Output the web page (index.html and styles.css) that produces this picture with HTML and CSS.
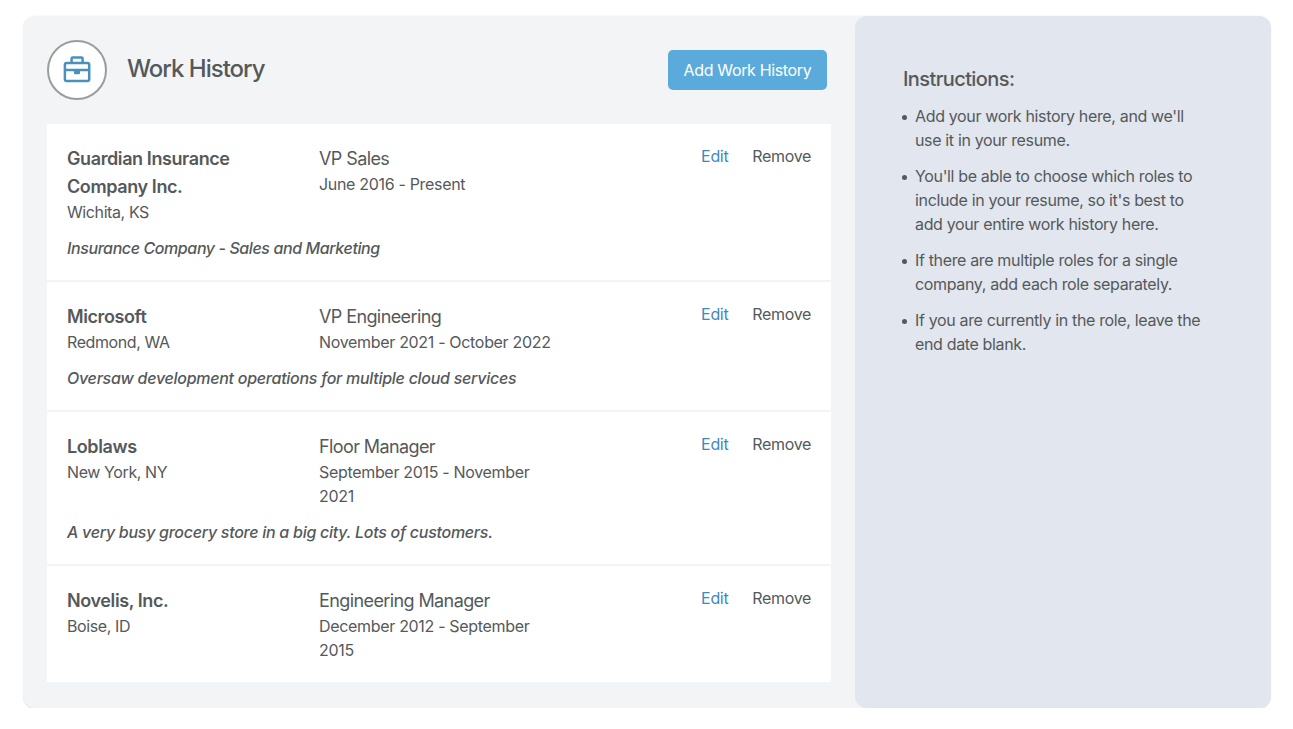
FILE: index.html
```html
<!DOCTYPE html>
<html lang="en">
<head>
<meta charset="utf-8">
<title>Work History</title>
<link rel="stylesheet" href="styles.css">
</head>
<body>
<main class="panel">
  <section class="history">
    <header class="header">
      <div class="badge">
        <svg width="28" height="28" viewBox="0 0 28 28" fill="none" stroke="#4a90bd" stroke-width="2.5" stroke-linejoin="round">
          <rect x="1.9" y="7.1" width="24.3" height="18" rx="1.8"/>
          <path d="M8.6 7V2.6q0-1 1-1h9q1 0 1 1V7M2 13.9h24"/>
          <path d="M11 14h6v3.2q0 1.1-1.1 1.1h-3.8q-1.1 0-1.1-1.1z" fill="#4a90bd" stroke="none"/>
        </svg>
      </div>
      <h1 class="title">Work History</h1>
      <button class="add">Add Work History</button>
    </header>
    <div class="list">
      <article class="job">
        <div class="row">
          <div class="company"><h2 class="name">Guardian Insurance<br>Company Inc.</h2><p class="meta">Wichita, KS</p></div>
          <div class="role"><h3 class="position">VP Sales</h3><p class="meta">June 2016 - Present</p></div>
          <div class="actions"><a class="edit">Edit</a><a class="remove">Remove</a></div>
        </div>
        <p class="summary tight">Insurance Company - Sales and Marketing</p>
      </article>
      <article class="job">
        <div class="row">
          <div class="company"><h2 class="name">Microsoft</h2><p class="meta">Redmond, WA</p></div>
          <div class="role"><h3 class="position">VP Engineering</h3><p class="meta">November 2021 - October 2022</p></div>
          <div class="actions"><a class="edit">Edit</a><a class="remove">Remove</a></div>
        </div>
        <p class="summary">Oversaw development operations for multiple cloud services</p>
      </article>
      <article class="job">
        <div class="row">
          <div class="company"><h2 class="name">Loblaws</h2><p class="meta">New York, NY</p></div>
          <div class="role"><h3 class="position">Floor Manager</h3><p class="meta">September 2015 - November<br>2021</p></div>
          <div class="actions"><a class="edit">Edit</a><a class="remove">Remove</a></div>
        </div>
        <p class="summary">A very busy grocery store in a big city. Lots of customers.</p>
      </article>
      <article class="job">
        <div class="row">
          <div class="company"><h2 class="name">Novelis, Inc.</h2><p class="meta">Boise, ID</p></div>
          <div class="role"><h3 class="position">Engineering Manager</h3><p class="meta">December 2012 - September<br>2015</p></div>
          <div class="actions"><a class="edit">Edit</a><a class="remove">Remove</a></div>
        </div>
      </article>
    </div>
  </section>
  <aside class="help">
    <h2 class="help-title">Instructions:</h2>
    <ul class="tips">
      <li>Add your work history here, and we'll<br>use it in your resume.</li>
      <li>You'll be able to choose which roles to<br>include in your resume, so it's best to<br>add your entire work history here.</li>
      <li>If there are multiple roles for a single<br>company, add each role separately.</li>
      <li>If you are currently in the role, leave the<br>end date blank.</li>
    </ul>
  </aside>
</main>
</body>
</html>
```
FILE: styles.css
```css
* { box-sizing: border-box; margin: 0; padding: 0; }
body {
  background: #fff;
  color: #55595a;
  font: 16px/24px Inter, "Liberation Sans", sans-serif;
  letter-spacing: -0.32px;
  padding: 16px 22px 0 23px;
  white-space: nowrap;
}
.panel {
  display: flex;
  height: 692px;
  background: #f2f4f6;
  border-radius: 12px;
  box-shadow: 0 0 0 1px rgba(0,0,0,.02), 0 1px 0 rgba(0,0,0,.09);
}
.history { width: 832px; padding: 24px; }
.header { display: flex; align-items: center; height: 60px; margin-bottom: 24px; }
.badge {
  width: 60px; height: 60px;
  display: grid; place-items: center;
  background: #fff;
  border: 2px solid #9a9da0;
  border-radius: 50%;
}
.title { margin-left: 20px; flex: 1; font-size: 24px; line-height: 32px; font-weight: 500; letter-spacing: -1px; padding-bottom: 2px; }
.add {
  width: 159px; height: 40px; margin-right: 4px;
  border: 0; border-radius: 5px;
  background: #5aabdc; color: #fff;
  font: inherit; letter-spacing: -0.35px;
}
.list { display: grid; gap: 2px; width: 784px; }
.job { background: #fff; padding: 20px; }
.row { display: flex; }
.company { width: 252px; }
.role { flex: 1; }
.name, .position { font-size: 18px; line-height: 28px; }
/* Optical baseline shift inside the fixed 28px line */
.name, .position { padding-top: 1px; margin-bottom: -1px; }
.name { font-weight: 600; letter-spacing: -0.4px; }
.position { font-weight: 400; letter-spacing: -0.6px; }
.company .meta { letter-spacing: -0.4px; }
.actions { display: flex; gap: 24px; }
.edit { color: #3b8abf; }
.remove { letter-spacing: -0.34px; }
.summary { margin-top: 12px; font-style: italic; font-weight: 500; letter-spacing: -0.27px; }
.summary.tight { letter-spacing: -0.4px; }
.help { flex: 1; background: #e2e6ee; border-radius: 12px; padding: 49px 48px 48px; }
.help-title { font-size: 20px; line-height: 28px; font-weight: 500; letter-spacing: -0.6px; }
.tips { list-style: none; margin-top: 11px; display: grid; gap: 12px; letter-spacing: -0.35px; }
.tips li { position: relative; padding-left: 12px; }
.tips li::before { content: ""; position: absolute; left: -1.5px; top: 10.5px; width: 5px; height: 5px; border-radius: 50%; background: #55595a; }
```
